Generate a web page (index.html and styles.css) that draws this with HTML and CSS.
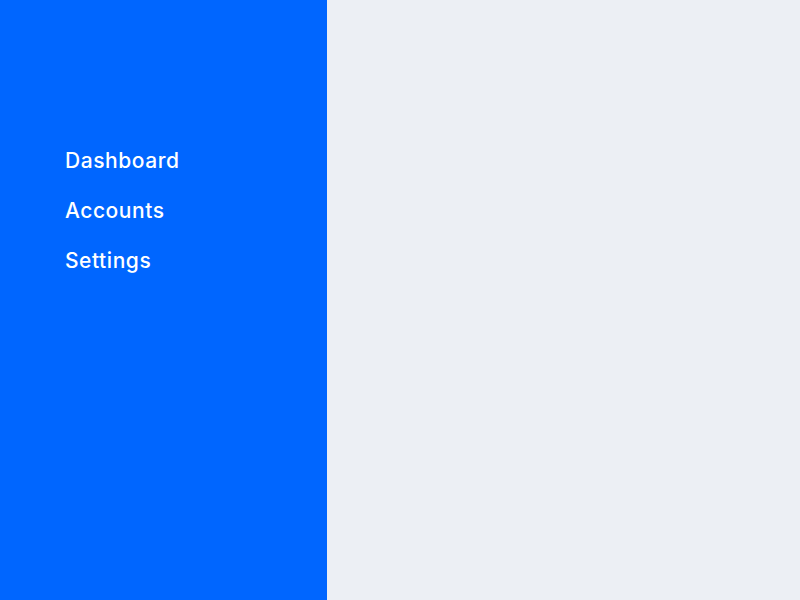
FILE: index.html
```html
<!DOCTYPE html>
<html>
<head>
<meta charset="utf-8">
<link rel="stylesheet" href="styles.css">
</head>
<body>
<div class="layout">
  <nav class="sidebar">
    <ul class="menu">
      <li class="menu-item">Dashboard</li>
      <li class="menu-item">Accounts</li>
      <li class="menu-item">Settings</li>
    </ul>
  </nav>
  <main class="content"></main>
</div>
</body>
</html>
```
FILE: styles.css
```css
html, body {
  margin: 0;
  padding: 0;
  height: 100%;
}
body {
  font-family: "Inter", "Liberation Sans", sans-serif;
}
.layout {
  display: flex;
  height: 600px;
  width: 800px;
}
.sidebar {
  width: 327px;
  flex: none;
  background: #0066ff;
  display: flex;
  flex-direction: column;
  justify-content: center;
}
.menu {
  list-style: none;
  margin: 0;
  padding: 0 0 0 65px;
  display: flex;
  flex-direction: column;
  gap: 26px;
  transform: translateY(-89px);
}
.menu-item {
  color: #ffffff;
  font-size: 21px;
  font-weight: 500;
  line-height: 24px;
  letter-spacing: 0.55px;
}
.content {
  flex: 1;
  background: #eceff4;
}
```
